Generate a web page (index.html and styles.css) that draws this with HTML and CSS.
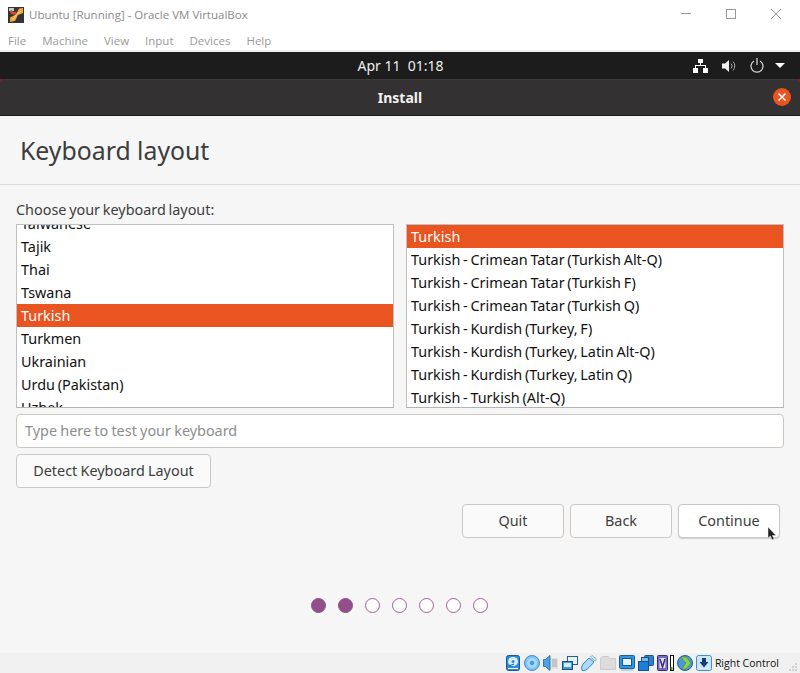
FILE: index.html
```html
<!DOCTYPE html>
<html lang="en">
<head>
<meta charset="utf-8">
<title>Ubuntu [Running] - Oracle VM VirtualBox</title>
<link rel="stylesheet" href="styles.css">
</head>
<body>
<div class="window">
  <header class="titlebar">
    <svg class="app-icon" width="16" height="16" viewBox="0 0 16 16"><rect width="16" height="16" fill="#33343a"/><rect x="1" y="1" width="5" height="3" fill="#c9c9c9"/><path d="M3 3.500c0 3 3 3.500 5 2" stroke="#d9541e" stroke-width="2.400" fill="none"/><path d="M2 15l5-1 3-6 5-2V1l-4 .5-3 6-6 3z" fill="#f8a436"/><path d="M5 13l3.500-6L13 4" stroke="#fdd28a" fill="none"/></svg>
    <span class="title-text">Ubuntu [Running] - Oracle VM VirtualBox</span>
    <div class="win-controls">
      <svg width="10" height="10" viewBox="0 0 10 10"><path d="M0 4.500H10" stroke="#999" fill="none"/></svg>
      <svg width="10" height="10" viewBox="0 0 10 10"><rect x=".5" y=".5" width="9" height="9" stroke="#999" fill="none"/></svg>
      <svg width="10" height="10" viewBox="0 0 10 10"><path d="M0 0L10 10M10 0L0 10" stroke="#999" fill="none"/></svg>
    </div>
  </header>
  <nav class="menubar">
    <span>File</span><span>Machine</span><span>View</span><span>Input</span><span>Devices</span><span>Help</span>
  </nav>
  <div class="vm">
    <div class="top-panel">
      <span class="clock">Apr 11&nbsp; 01:18</span>
      <div class="tray">
        <svg width="15" height="14" viewBox="0 0 15 14"><path d="M5 0h5v4H8v2h5v3h2v5h-5V9h2V7H3v2h2v5H0V9h2V6h5V4H5z" fill="#fff"/></svg>
        <svg width="14" height="14" viewBox="0 0 14 14"><path d="M0 4.500h3L7 1v12L3 9.500H0z" fill="#eee"/><path d="M9 4.500a3.500 3.500 0 0 1 0 5M11 2.500a6.500 6.500 0 0 1 0 9" stroke="#aaa" fill="none"/></svg>
        <svg width="14" height="15" viewBox="0 0 14 15"><path d="M4 3a6 6 0 1 0 6 0M7 0v7" stroke="#ddd" stroke-width="1.200" fill="none"/></svg>
        <svg class="tray-arrow" width="10" height="5" viewBox="0 0 10 5"><path d="M0 0h10L5 5z" fill="#fff"/></svg>
      </div>
    </div>
    <div class="headerbar">
      <span class="corner corner-left"></span>
      <span class="corner corner-right"></span>
      <strong class="header-title">Install</strong>
      <span class="close"><svg width="10" height="10" viewBox="0 0 10 10"><path d="M1.500 1.500l7 7M8.500 1.500l-7 7" stroke="#fff" stroke-width="1.600" fill="none"/></svg></span>
    </div>
    <main class="content">
      <div class="page-head"><h1>Keyboard layout</h1></div>
      <div class="form">
        <label class="choose">Choose your keyboard layout:</label>
        <div class="lists">
          <ul class="list list-left">
            <li>Taiwanese</li><li>Tajik</li><li>Thai</li><li>Tswana</li>
            <li class="selected">Turkish</li><li>Turkmen</li><li>Ukrainian</li><li>Urdu (Pakistan)</li><li>Uzbek</li>
          </ul>
          <ul class="list">
            <li class="selected">Turkish</li>
            <li>Turkish - Crimean Tatar (Turkish Alt-Q)</li>
            <li>Turkish - Crimean Tatar (Turkish F)</li>
            <li>Turkish - Crimean Tatar (Turkish Q)</li>
            <li>Turkish - Kurdish (Turkey, F)</li>
            <li>Turkish - Kurdish (Turkey, Latin Alt-Q)</li>
            <li>Turkish - Kurdish (Turkey, Latin Q)</li>
            <li>Turkish - Turkish (Alt-Q)</li>
          </ul>
        </div>
        <div class="entry">Type here to test your keyboard</div>
        <div class="detect-row"><button class="btn detect">Detect Keyboard Layout</button></div>
        <div class="actions">
          <button class="btn action">Quit</button>
          <button class="btn action">Back</button>
          <button class="btn action primary">Continue
            <svg class="cursor" width="9" height="13" viewBox="0 0 9 13"><path d="M1 0v11l2.500-2 1.500 4 2-1-1.500-3.500H9z" fill="#222" stroke="#eee" stroke-width=".5"/></svg>
          </button>
        </div>
        <div class="dots">
          <i class="dot on"></i><i class="dot on"></i><i class="dot"></i><i class="dot"></i><i class="dot"></i><i class="dot"></i><i class="dot"></i>
        </div>
      </div>
    </main>
  </div>
  <footer class="statusbar">
    <svg width="16" height="16" viewBox="0 0 16 16"><rect x="1.500" y=".5" width="13" height="15" rx="2" fill="#2f8ddc" stroke="#155a96"/><ellipse cx="8" cy="6.500" rx="5" ry="4.500" fill="#d7ecfb"/><circle cx="8" cy="6.500" r="1.500" fill="#2f8ddc"/><path d="M4 11l5-2" stroke="#155a96"/><path d="M3 13.500h10" stroke="#fff"/></svg>
    <svg width="16" height="16" viewBox="0 0 16 16"><circle cx="8" cy="8" r="7.500" fill="#7fc4f2" stroke="#3f8fc7"/><circle cx="8" cy="8" r="5" fill="#a5d8f8"/><circle cx="8" cy="8" r="1.800" fill="#4a9edc" stroke="#2f7fba" stroke-width=".6"/></svg>
    <svg width="16" height="16" viewBox="0 0 16 16"><path d="M6 3h9v11H6z" fill="#e0e0e0"/><path d="M9 5h5M9 7h5M9 9h5M9 11h5" stroke="#a8a8a8"/><path d="M.5 4.500h2L7 .5v15l-4.500-4h-2z" fill="#4aa3e4" stroke="#1d5f95" stroke-width=".8"/></svg>
    <svg width="16" height="16" viewBox="0 0 16 16"><rect x="5.500" y="1.500" width="10" height="8" fill="#e4f2fb" stroke="#2a5c8a"/><rect x=".5" y="6.500" width="10" height="8" fill="#3f9ae0" stroke="#1d4f80"/><rect x="2" y="8" width="7" height="4" fill="#d4ebfa"/></svg>
    <svg width="16" height="16" viewBox="0 0 16 16"><path d="M1 15.500c-1-3 0-5.500 2-7.500l5-5 5 4-5 5.500c-2 2-4.500 3.500-7 3z" fill="#a9dbf9" stroke="#2f86c4"/><path d="M9.500 2L11 .5l4.500 3.500-1.500 2z" fill="#f4f4f4" stroke="#2f86c4" stroke-width=".7"/></svg>
    <svg width="16" height="16" viewBox="0 0 16 16"><path d="M.5 3.500l2-2h6l1 2h6v11H.5z" fill="#dcdcdc" stroke="#cbcbcb"/></svg>
    <svg width="16" height="16" viewBox="0 0 16 16"><rect x=".5" y=".5" width="15" height="13" rx="1" fill="#2f96e4" stroke="#1d5f95"/><rect x="3.500" y="3.500" width="9" height="7" fill="#e9f5fd" stroke="#155a96"/><path d="M2 15h12" stroke="#a8c9e2" stroke-width="1.500"/></svg>
    <svg width="16" height="16" viewBox="0 0 16 16"><rect x="6.500" y=".5" width="9" height="10" rx="1" fill="#2f7fce" stroke="#1d4f80"/><rect x="3.500" y="2.500" width="7" height="6" fill="#7db8ea" stroke="#1d4f80"/><rect x=".5" y="6.500" width="10" height="9" fill="#1b7fd8" stroke="#1d4f80"/></svg>
    <svg class="vbox-v" width="11" height="16" viewBox="0 0 11 16"><rect x=".5" y=".5" width="10" height="15" rx="1" fill="#7a6ac0" stroke="#33307a"/><rect x="2.500" y="3" width="6" height="10" fill="#e2defa"/><path d="M3 4l2.500 8L8 4" stroke="#33307a" stroke-width="1.500" fill="none"/></svg>
    <svg class="tight" width="4" height="16" viewBox="0 0 4 16"><rect x=".5" y=".5" width="3" height="15" fill="#fff" stroke="#111"/><path d="M1.500 12v3" stroke="#2ea02e" stroke-width="2"/></svg>
    <svg width="16" height="16" viewBox="0 0 16 16"><circle cx="8" cy="8" r="7.500" fill="#4a98d8" stroke="#1d5f95"/><path d="M4 2h5l5 6-5 6H5l4-6z" fill="#8ed04e" stroke="#4f8f2a" stroke-width=".6"/></svg>
    <svg width="16" height="16" viewBox="0 0 16 16"><rect x=".5" y=".5" width="15" height="15" rx="2" fill="#cfe6f9" stroke="#3f8fc7"/><path d="M6 3h4v4h2.500L8 12.500 3.500 7H6z" fill="#123f7a"/></svg>
    <span class="host-key">Right Control</span>
    <svg class="grip" width="8" height="8" viewBox="0 0 8 8"><path d="M6 0h2v2H6zM3 3h2v2H3zM6 3h2v2H6zM0 6h2v2H0zM3 6h2v2H3zM6 6h2v2H6z" fill="#cfcfcf"/></svg>
  </footer>
</div>
</body>
</html>
```

FILE: styles.css
```css
* { box-sizing: border-box; }
html, body { margin: 0; padding: 0; }
body { width: 800px; height: 673px; overflow: hidden; background: #fff; font-family: "Noto Sans", sans-serif; }
.window { display: flex; flex-direction: column; height: 673px; }

.titlebar { height: 30px; flex: none; display: flex; align-items: center; padding-left: 8px; background: #fff; }
.app-icon { margin-right: 5px; margin-top: -1px; }
.title-text { font-size: 11.500px; color: #8a8a8a; font-family: "Open Sans", sans-serif; margin-top: -1px; }
.win-controls { margin-left: auto; display: flex; gap: 35px; padding-right: 19px; margin-top: -2px; }

.menubar { height: 20px; flex: none; display: flex; gap: 16px; padding: 1px 0 0 8px; font-size: 11.500px; line-height: 20px; color: #9a9a9a; font-family: "Open Sans", sans-serif; background: #fff; }

.vm { flex: 1; display: flex; flex-direction: column; min-height: 0; border-top: 2px solid #f0f0f0; background: #1c1c1c; isolation: isolate; }
.top-panel { height: 27px; flex: none; background: #1c1c1c; position: relative; display: flex; align-items: center; justify-content: center; }
.clock { color: #eee; font-size: 14px; margin-left: 1px; }
.tray { position: absolute; right: 15px; top: 0; height: 100%; display: flex; align-items: center; gap: 14px; }
.tray-arrow { margin-left: -3px; }

.headerbar { height: 37px; flex: none; background: #333132; border-top: 1px solid #3d3b3c; border-bottom: 1px solid #1c1c1c; border-radius: 6px 6px 0 0; display: flex; align-items: center; justify-content: center; position: relative; }
.corner { position: absolute; top: -1px; width: 4px; height: 4px; background: #7c1f28; z-index: -1; }
.corner-left { left: 0; }
.corner-right { right: 0; }
.header-title { color: #f2f2f2; font-size: 14px; font-weight: 700; }
.close { position: absolute; right: 9px; top: 8px; width: 18px; height: 18px; border-radius: 50%; background: #e95420; display: flex; align-items: center; justify-content: center; }

.content { flex: 1; background: #f6f6f6; display: flex; flex-direction: column; min-height: 0; }
.page-head { height: 69px; flex: none; border-bottom: 1px solid #dcdcdc; padding: 17px 0 0 20px; }
h1 { margin: 0; font-size: 24.800px; line-height: 34px; font-weight: 400; color: #3d3d3d; }
.form { padding: 0 16px; display: flex; flex-direction: column; flex: 1; }
.choose { font-size: 14.400px; word-spacing: -1px; line-height: 20px; margin-top: 15px; color: #3d3d3d; height: 20px; }
.lists { display: flex; gap: 12px; margin-top: 4px; }
.list { flex: 1; height: 184px; margin: 0; padding: 0; list-style: none; background: #fff; border: 1px solid #c0c0c0; border-bottom-color: #b4b4b4; overflow: hidden; font-size: 14.400px; word-spacing: -1px; color: #111; }
.list li { height: 23px; line-height: 23px; padding-left: 4px; white-space: nowrap; }
.list-left li:first-child { margin-top: -13px; }
.list .selected { background: #e95420; color: #fff; }

.entry { height: 34px; margin-top: 6px; background: #fff; border: 1px solid #cdc7c2; border-radius: 4px; padding-left: 8px; line-height: 32px; font-size: 14.400px; word-spacing: -.5px; color: #8d8d8d; }
.detect-row { display: flex; margin-top: 6px; }
.btn { height: 34px; font-family: inherit; font-size: 14.400px; color: #3d3d3d; background: #fafafa; border: 1px solid #cdc7c2; border-radius: 4px; padding: 0 0 2px; }
.detect { width: 195px; word-spacing: -.5px; }
.actions { display: flex; justify-content: flex-end; gap: 6px; margin-top: 16px; padding-right: 4px; }
.action { width: 102px; position: relative; }
.primary { background: #fff; box-shadow: 0 1px 1px rgba(0,0,0,.15); }
.cursor { position: absolute; right: 3px; top: 22px; }
.dots { display: flex; justify-content: center; gap: 12px; margin-top: 60px; padding-right: 1px; }
.dot { width: 15px; height: 15px; border-radius: 50%; background: #fff; border: 1.500px solid #a45a9a; }
.dot.on { background: #924d8b; border-color: #924d8b; }

.statusbar { height: 20px; flex: none; background: #f0f0f0; display: flex; align-items: center; justify-content: flex-end; gap: 3px; padding-right: 3px; }
.statusbar .vbox-v { margin-right: -1px; }
.statusbar .tight { margin-right: 0; }
.host-key { font-family: "Open Sans", sans-serif; font-size: 10.500px; color: #111; }
.grip { margin-left: 7px; margin-top: 7px; }
```
